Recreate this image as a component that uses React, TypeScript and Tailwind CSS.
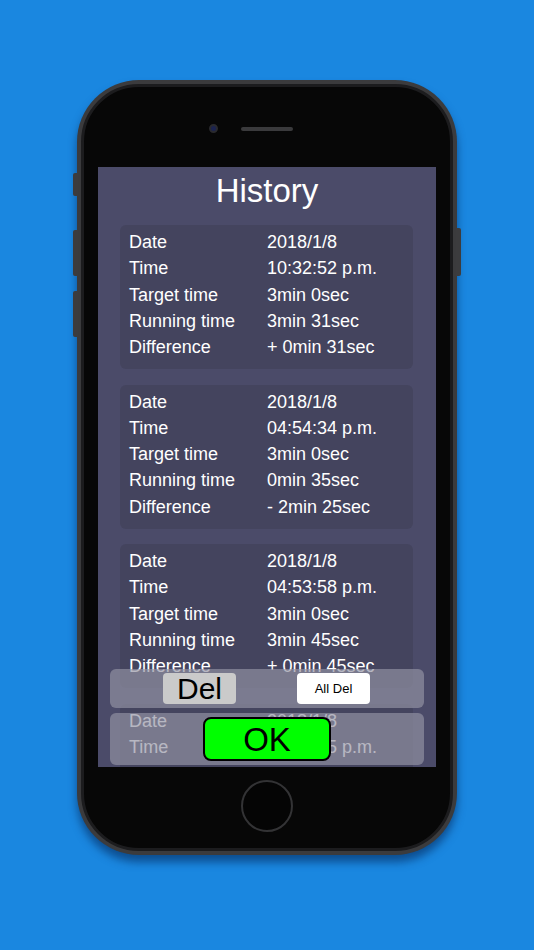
import React from "react";

type Rec = { date: string; time: string; target: string; running: string; diff: string };

const records: Rec[] = [
  { date: "2018/1/8", time: "10:32:52 p.m.", target: "3min 0sec", running: "3min 31sec", diff: "+ 0min 31sec" },
  { date: "2018/1/8", time: "04:54:34 p.m.", target: "3min 0sec", running: "0min 35sec", diff: "- 2min 25sec" },
  { date: "2018/1/8", time: "04:53:58 p.m.", target: "3min 0sec", running: "3min 45sec", diff: "+ 0min 45sec" },
  { date: "2018/1/8", time: "04:53:15 p.m.", target: "3min 0sec", running: "0min 43sec", diff: "- 2min 17sec" },
];

function Card({ r, visibleRows = 5 }: { r: Rec; visibleRows?: number }) {
  const rows: [string, string][] = [
    ["Date", r.date],
    ["Time", r.time],
    ["Target time", r.target],
    ["Running time", r.running],
    ["Difference", r.diff],
  ];
  return (
    <div className="mx-[22px] w-[293px] h-[144px] shrink-0 rounded-[6px] bg-[#44445e] pt-[4px] pb-[9px]">
      {rows.slice(0, visibleRows).map(([k, v]) => (
        <div key={k} className="flex text-[18px] leading-[26.25px] text-white">
          <div className="w-[147px] pl-[9px]">{k}</div>
          <div>{v}</div>
        </div>
      ))}
    </div>
  );
}

export default function App() {
  return (
    <div
      className="w-[534px] h-[950px] bg-[#1a87e0] pt-[80px] pl-[77px] overflow-hidden"
      style={{ fontFamily: '"Liberation Sans", Arial, sans-serif' }}
    >
      <div className="relative w-[380px] h-[775px]">
        {/* side buttons */}
        <div className="absolute left-[-4px] top-[93px] w-[5px] h-[23px] rounded-l-[2px] bg-[#3c3c3e]" />
        <div className="absolute left-[-4px] top-[150px] w-[5px] h-[46px] rounded-l-[2px] bg-[#3c3c3e]" />
        <div className="absolute left-[-4px] top-[211px] w-[5px] h-[46px] rounded-l-[2px] bg-[#3c3c3e]" />
        <div className="absolute right-[-4px] top-[148px] w-[5px] h-[48px] rounded-r-[2px] bg-[#3c3c3e]" />
        <div className="w-full h-full rounded-[62px] bg-[#3b3b3d] p-[4px] shadow-[0_7px_8px_rgba(5,40,90,0.6)]">
          <div className="w-full h-full rounded-[58px] bg-[#070707] border-[3px] border-[#1c1c1e] flex flex-col items-center">
            {/* top */}
            <div className="h-[80px] w-full flex justify-center items-start pt-[37px]">
              <div className="flex items-center">
                <div className="w-[9px] h-[9px] rounded-full bg-[#1b2350] border-[2px] border-[#2a2a2e]" />
                <div className="w-[23px]" />
                <div className="w-[52px] h-[4px] rounded-full bg-[#3a3a3c]" />
                <div className="w-[23px]" />
                <div className="w-[9px]" />
              </div>
            </div>
            {/* screen */}
            <div className="relative w-[338px] h-[600px] bg-[#4b4b69] overflow-hidden">
              <div className="h-[46px] flex items-center justify-center text-white text-[33px] leading-none">
                History
              </div>
              <div className="mt-[12px] flex flex-col gap-[15.5px]">
                {records.map((r, i) => (
                  <Card key={i} r={r} visibleRows={i === 3 ? 2 : 5} />
                ))}
              </div>
              {/* overlay bars */}
              <div className="absolute left-[12px] top-[502px] w-[314px] h-[39px] rounded-[6px] bg-[#9494a4]/[0.67]">
                <div className="absolute left-[53px] top-[4px] w-[73px] h-[31px] rounded-[4px] bg-[#cacaca] flex items-center justify-center text-black text-[30px] leading-none">
                  Del
                </div>
                <div className="absolute left-[187px] top-[4px] w-[73px] h-[31px] rounded-[4px] bg-white flex items-center justify-center text-black text-[13px] leading-none">
                  All Del
                </div>
              </div>
              <div className="absolute left-[12px] top-[546px] w-[314px] h-[52px] rounded-[6px] bg-[#9494a4]/[0.67]">
                <div className="absolute left-[93px] top-[4px] w-[128px] h-[44px] rounded-[8px] bg-[#00ff00] border-[2.5px] border-black flex items-center justify-center text-black text-[33px] leading-none">
                  OK
                </div>
              </div>
            </div>
            {/* bottom */}
            <div className="flex-1 w-full flex justify-center pt-[13px]">
              <div className="w-[52px] h-[52px] rounded-full border-[2px] border-[#333335] bg-[#050505]" />
            </div>
          </div>
        </div>
      </div>
    </div>
  );
}
